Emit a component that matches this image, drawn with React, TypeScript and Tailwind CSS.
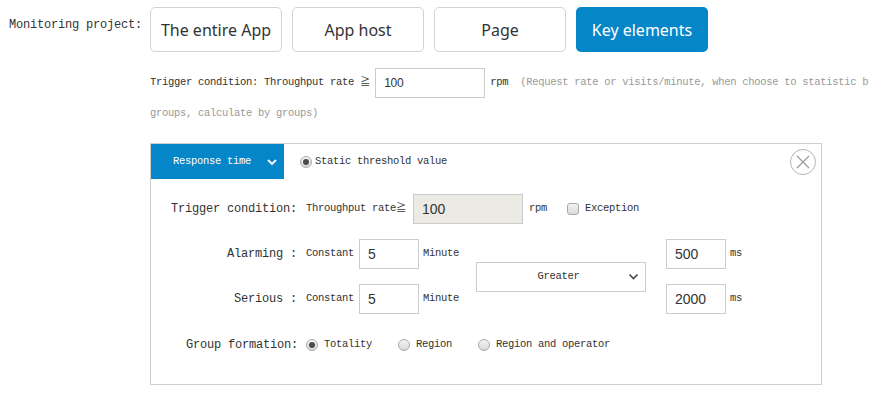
import React from "react";

const mono = "font-['Liberation_Mono','Noto_Sans_CJK_SC',monospace]";
const big = `${mono} text-[12px] tracking-[-0.2px]`;
const small = `${mono} text-[10.5px] tracking-[-0.3px]`;

function Radio({ checked }: { checked?: boolean }) {
  return (
    <span className="flex h-[12px] w-[12px] shrink-0 items-center justify-center rounded-full border border-[#a9a9a9] bg-gradient-to-b from-[#f4f4f4] to-[#d9d9d9]">
      {checked && <span className="h-[6px] w-[6px] rounded-full bg-[#4a4a4a]" />}
    </span>
  );
}

function Field({ value, width, gray, size = "text-[14px]" }: { value: string; width: string; gray?: boolean; size?: string }) {
  return (
    <div
      className={
        "flex h-[30px] shrink-0 items-center border border-[#cccccc] pl-[8px] font-['Liberation_Sans',sans-serif] text-[#333] " +
        size +
        " " +
        width +
        (gray ? " bg-[#ebebe4]" : " bg-white")
      }
    >
      {value}
    </div>
  );
}

export default function App() {
  const tabs = ["The entire App", "App host", "Page", "Key elements"];

  return (
    <div className="h-[399px] w-[869px] overflow-hidden bg-white text-[#333]">
      <div className="flex pt-[7px]">
        <div className={"w-[150px] pl-[9px] pt-[9px] " + big}>Monitoring project:</div>
        <div className="flex gap-[10px]">
          {tabs.map((tab, i) => (
            <div
              key={tab}
              className={
                "flex h-[45px] w-[132px] items-center justify-center rounded-[5px] font-['Noto_Sans',sans-serif] text-[16px] " +
                (i === 3 ? "bg-[#0586c8] text-white" : "border border-[#d2d2d2] bg-white text-[#333]")
              }
            >
              {tab}
            </div>
          ))}
        </div>
      </div>

      <div className="pl-[150px]">
        <div className={"mt-[16px] flex items-center whitespace-nowrap " + small}>
          <span>Trigger condition: Throughput rate ≧</span>
          <div className="ml-[5px]">
            <Field value="100" width="w-[110px]" size="text-[12px]" />
          </div>
          <span className="ml-[5px]">rpm</span>
          <span className="ml-[12px] text-[#999]">(Request rate or visits/minute, when choose to statistic by</span>
        </div>
        <div className={"mt-[8px] h-[14px] leading-[14px] text-[#999] " + small}>groups, calculate by groups)</div>

        <div className="mt-[23px] h-[242px] w-[672px] border border-[#cfcfcf]">
          <div className="flex h-[35px] items-center">
            <div className="flex h-[35px] w-[133px] items-center justify-between bg-[#0586c8] pl-[22px] pr-[6px] text-white">
              <span className={small}>Response time</span>
              <svg width="12" height="8" viewBox="0 0 12 8" fill="none" stroke="currentColor" strokeWidth="1.8">
                <path d="M2 2l4 4 4-4" />
              </svg>
            </div>
            <div className="ml-[16px] flex items-center gap-[3px]">
              <Radio checked />
              <span className={small}>Static threshold value</span>
            </div>
            <div className="ml-auto mr-[5px] flex h-[26px] w-[26px] items-center justify-center rounded-full border border-[#b5b5b5]">
              <svg width="14" height="14" viewBox="0 0 14 14" stroke="#9a9a9a" strokeWidth="1.2">
                <path d="M1 1l12 12M13 1L1 13" />
              </svg>
            </div>
          </div>

          <div className="mt-[15px] flex items-center">
            <div className={"w-[146px] text-right " + big}>Trigger condition:</div>
            <span className={"ml-[9px] w-[107px] " + small}>Throughput rate≧</span>
            <Field value="100" width="w-[110px]" gray />
            <span className={"ml-[6px] " + small}>rpm</span>
            <span className="ml-[20px] h-[12px] w-[12px] rounded-[3px] border border-[#a9a9a9] bg-gradient-to-b from-[#f4f4f4] to-[#d9d9d9]" />
            <span className={"ml-[6px] " + small}>Exception</span>
          </div>

          <div className="mt-[15px] flex items-center">
            <div className="flex flex-col gap-[15px]">
              {[
                ["Alarming :", "5"],
                ["Serious :", "5"],
              ].map(([label, v]) => (
                <div key={label} className="flex items-center">
                  <div className={"w-[146px] text-right " + big}>{label}</div>
                  <span className={"ml-[9px] w-[53px] " + small}>Constant</span>
                  <Field value={v} width="w-[60px]" />
                  <span className={"ml-[4px] " + small}>Minute</span>
                </div>
              ))}
            </div>
            <div className="ml-[17px] flex h-[30px] w-[170px] items-center border border-[#cccccc] bg-white pr-[6px]">
              <span className={"flex-1 pl-[12px] text-center " + small}>Greater</span>
              <svg width="11" height="7" viewBox="0 0 11 7" fill="none" stroke="#444" strokeWidth="1.6">
                <path d="M1.5 1.5l4 4 4-4" />
              </svg>
            </div>
            <div className="ml-[20px] flex flex-col gap-[15px]">
              {["500", "2000"].map((v) => (
                <div key={v} className="flex items-center">
                  <Field value={v} width="w-[60px]" />
                  <span className={"ml-[4px] " + small}>ms</span>
                </div>
              ))}
            </div>
          </div>

          <div className="mt-[21px] flex h-[20px] items-center">
            <div className={"w-[147px] text-right " + big}>Group formation:</div>
            <div className="ml-[8px] flex items-center gap-[6px]">
              <Radio checked />
              <span className={small}>Totality</span>
            </div>
            <div className="ml-[26px] flex items-center gap-[6px]">
              <Radio />
              <span className={small}>Region</span>
            </div>
            <div className="ml-[26px] flex items-center gap-[6px]">
              <Radio />
              <span className={small}>Region and operator</span>
            </div>
          </div>
        </div>
      </div>
    </div>
  );
}
